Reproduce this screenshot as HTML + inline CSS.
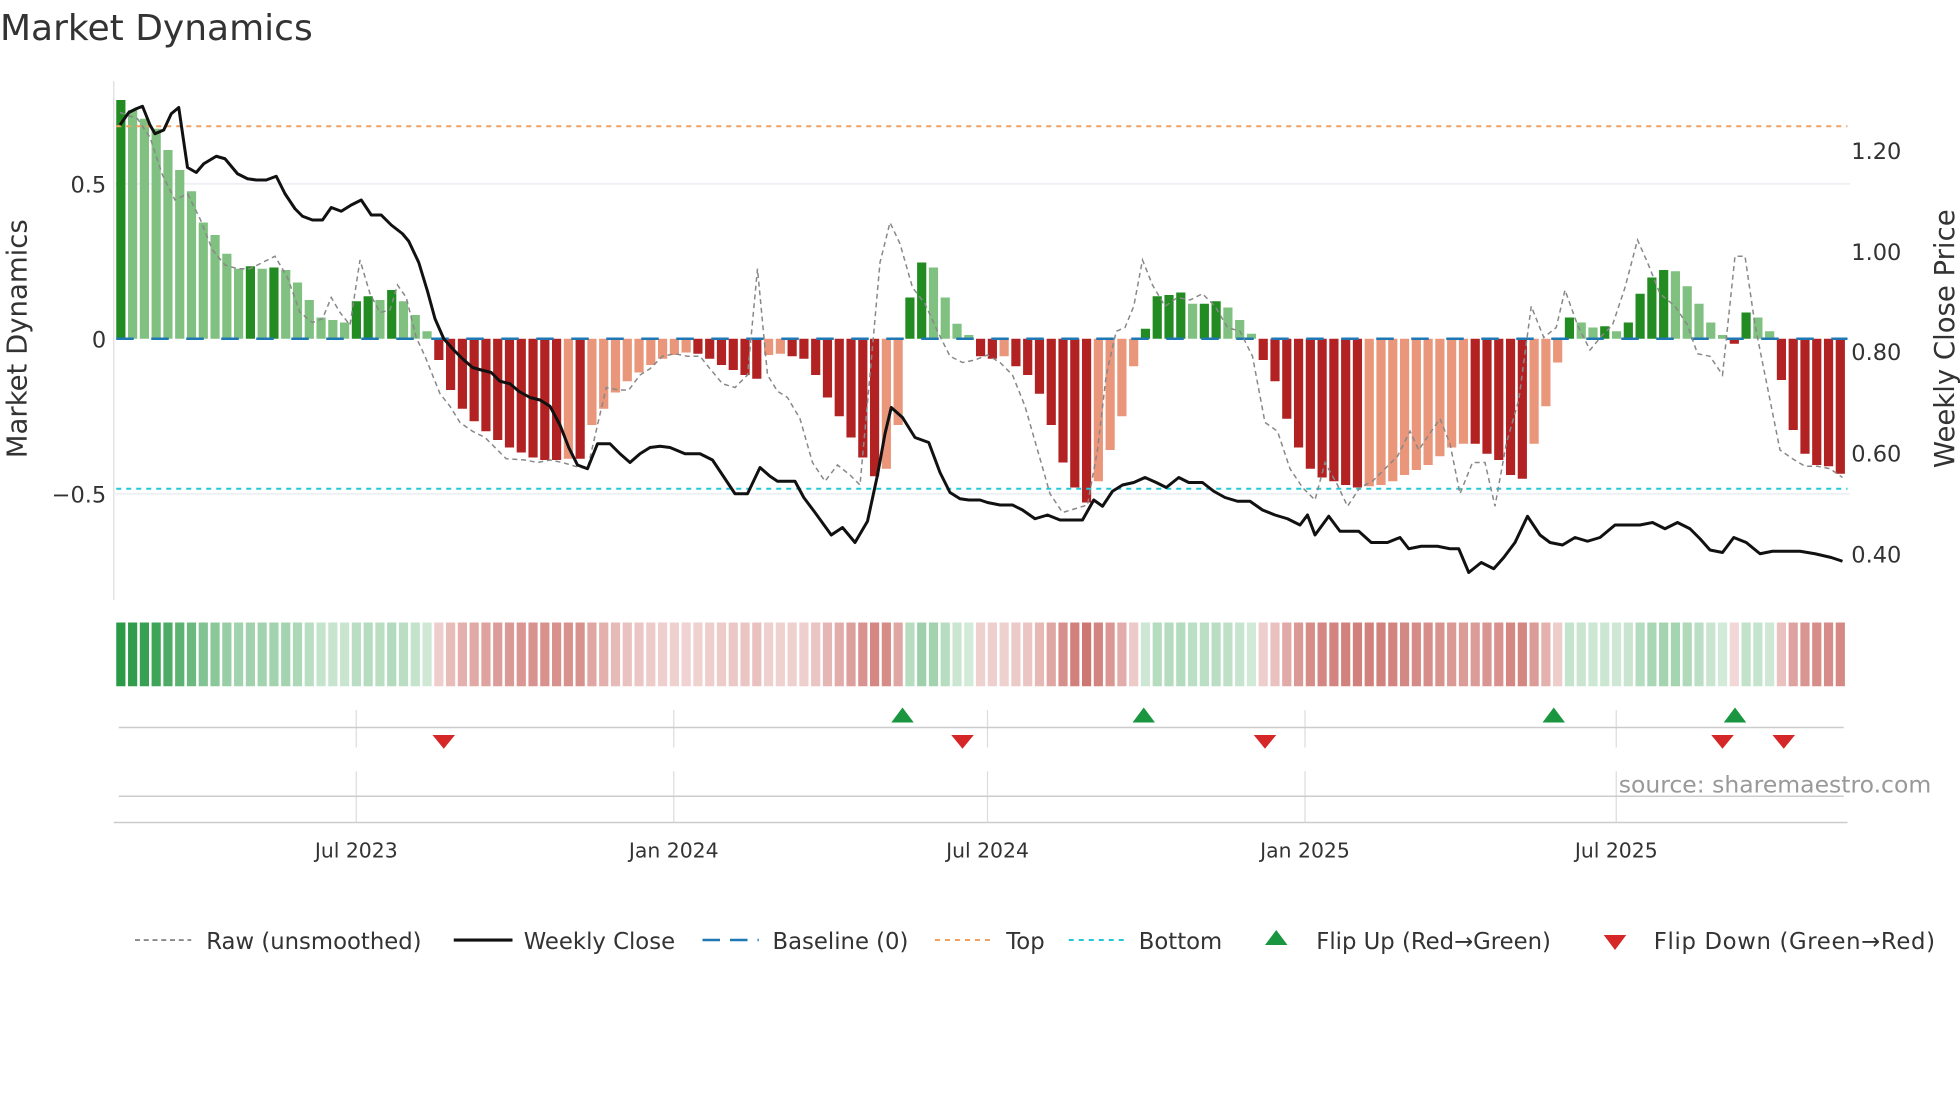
<!DOCTYPE html>
<html><head><meta charset="utf-8"><style>
html,body{margin:0;padding:0;background:#fff;}
svg{display:block;font-family:"DejaVu Sans","Liberation Sans",sans-serif;}
</style></head><body>
<svg id="s" width="1960" height="1102" viewBox="0 0 1568 881.6" xmlns="http://www.w3.org/2000/svg">
<rect width="1568" height="881.6" fill="#fff"/>
<text x="0" y="32" font-size="28.8" fill="#333">Market Dynamics</text>
<line x1="91" y1="65" x2="91" y2="480" stroke="#ddd" stroke-width="1"/>
<line x1="91" y1="147" x2="1480" y2="147" stroke="#eef0f5" stroke-width="1.5"/>
<line x1="91" y1="395" x2="1480" y2="395" stroke="#eef0f5" stroke-width="1.5"/>
<g id="bars"></g>
<line x1="93" y1="101" x2="1478" y2="101" stroke="#f0a060" stroke-width="1.6" stroke-dasharray="4,4"/>
<line x1="93" y1="391" x2="1478" y2="391" stroke="#22c8d8" stroke-width="1.6" stroke-dasharray="4,4"/>
<line x1="93" y1="271" x2="1478" y2="271" stroke="#1f77b4" stroke-width="2" stroke-dasharray="14,14"/>
<polyline id="raw" fill="none" stroke="#888" stroke-width="1.2" stroke-dasharray="4,3"/>
<polyline id="close" fill="none" stroke="#111" stroke-width="2.4" stroke-linejoin="round"/>
<g font-size="18" fill="#333">
<text x="85" y="154" text-anchor="end">0.5</text>
<text x="85" y="278" text-anchor="end">0</text>
<text x="85" y="402" text-anchor="end">−0.5</text>
<text x="1481" y="127">1.20</text>
<text x="1481" y="208">1.00</text>
<text x="1481" y="288">0.80</text>
<text x="1481" y="369">0.60</text>
<text x="1481" y="450">0.40</text>
</g>
<text transform="translate(21,271) rotate(-90)" text-anchor="middle" font-size="22" fill="#333">Market Dynamics</text>
<text transform="translate(1563,271) rotate(-90)" text-anchor="middle" font-size="22" fill="#333">Weekly Close Price</text>
<g id="strip"></g>
<g stroke="#ddd" stroke-width="1">
<line x1="285" y1="568" x2="285" y2="598"/><line x1="539" y1="568" x2="539" y2="598"/><line x1="790" y1="568" x2="790" y2="598"/><line x1="1044" y1="568" x2="1044" y2="598"/><line x1="1293" y1="568" x2="1293" y2="598"/>
<line x1="285" y1="617" x2="285" y2="658"/><line x1="539" y1="617" x2="539" y2="658"/><line x1="790" y1="617" x2="790" y2="658"/><line x1="1044" y1="617" x2="1044" y2="658"/><line x1="1293" y1="617" x2="1293" y2="658"/>
</g>
<line x1="95" y1="582" x2="1475" y2="582" stroke="#ccc" stroke-width="1.2"/>
<line x1="95" y1="637" x2="1475" y2="637" stroke="#ccc" stroke-width="1.2"/>
<line x1="91" y1="658" x2="1478" y2="658" stroke="#ccc" stroke-width="1.2"/>
<g fill="#1a9641">
<polygon points="722,566 731,578 713,578"/><polygon points="915,566 924,578 906,578"/><polygon points="1243,566 1252,578 1234,578"/><polygon points="1388,566 1397,578 1379,578"/>
</g>
<g fill="#d62728">
<polygon points="346,588 364,588 355,599"/><polygon points="761,588 779,588 770,599"/><polygon points="1003,588 1021,588 1012,599"/><polygon points="1369,588 1387,588 1378,599"/><polygon points="1418,588 1436,588 1427,599"/>
</g>
<text x="1545" y="634" text-anchor="end" font-size="18.8" fill="#999">source: sharemaestro.com</text>
<g font-size="16.3" fill="#333" text-anchor="middle">
<text x="285" y="686">Jul 2023</text><text x="539" y="686">Jan 2024</text><text x="790" y="686">Jul 2024</text><text x="1044" y="686">Jan 2025</text><text x="1293" y="686">Jul 2025</text>
</g>
<g font-size="18.2" fill="#333">
<line x1="108" y1="752" x2="153" y2="752" stroke="#777" stroke-width="1.3" stroke-dasharray="4,3"/>
<text x="165" y="759">Raw (unsmoothed)</text>
<line x1="363" y1="752" x2="410" y2="752" stroke="#111" stroke-width="2.5"/>
<text x="419" y="759">Weekly Close</text>
<line x1="562" y1="752" x2="607" y2="752" stroke="#1f77b4" stroke-width="2" stroke-dasharray="14,8"/>
<text x="618" y="759">Baseline (0)</text>
<line x1="748" y1="752" x2="793" y2="752" stroke="#f0a060" stroke-width="1.6" stroke-dasharray="4,4"/>
<text x="805" y="759">Top</text>
<line x1="855" y1="752" x2="900" y2="752" stroke="#22c8d8" stroke-width="1.6" stroke-dasharray="4,4"/>
<text x="911" y="759">Bottom</text>
<polygon points="1021,744 1030,756 1012,756" fill="#1a9641"/>
<text x="1053" y="759">Flip Up (Red→Green)</text>
<polygon points="1283,748 1301,748 1292,760" fill="#d62728"/>
<text x="1323" y="759" textLength="225">Flip Down (Green→Red)</text>
</g>
</svg>
<script>
var ys=[80,88,95,103,120,136,153,178,188,203,215,213,215,214,216,226,240,254,256,258,241,237,240,232,241,252,265,
288,312,327,337,345,352,358,362,366,368,368,367,367,340,327,314,305,298,292,287,284,282,283,287,292,296,300,303,284,283,285,287,300,318,333,350,366,381,375,340,
238,210,214,238,259,268,
285,287,285,293,300,315,340,370,390,402,385,360,333,293,
263,237,236,234,243,243,241,246,256,267,
288,305,335,358,375,382,385,388,390,389,388,385,380,376,372,365,358,355,355,363,368,380,383,355,325,290,
254,258,262,261,265,258,235,222,216,217,229,243,258,268,275,250,254,265,
304,344,363,372,373,379];
var N=ys.length,sp=(1478-93)/N,ns="http://www.w3.org/2000/svg";
function el(t,a,p){var e=document.createElementNS(ns,t);for(var k in a)e.setAttribute(k,a[k]);p.appendChild(e);}
var bars=document.getElementById('bars'),strip=document.getElementById('strip');
function mix(c,a){return 'rgb('+c.map(function(v){return Math.round(255-(255-v)*a)}).join(',')+')';}
for(var i=0;i<N;i++){var y=ys[i],v=(271-y)/248,pv=i?(271-ys[i-1])/248:0;
 var pos=v>=0,ps=pv>=0,dark=(pos!=ps)||Math.abs(v)>=Math.abs(pv);
 var col=pos?(dark?'#228b22':'#80c080'):(dark?'#b22222':'#e9967a');
 var x=93+i*sp;
 el('rect',{x:x,y:Math.min(y,271),width:sp*0.78,height:Math.max(1,Math.abs(y-271)),fill:col},bars);
 var a=0.2+0.8*Math.min(1,Math.abs(v)/0.77);
 el('rect',{x:x,y:498,width:sp*0.78,height:51,fill:pos?mix([42,154,70],a):mix([196,90,84],Math.min(1,a*1.1))},strip);
}
var cl="96,100 103,90 109,87 114,85 120,100 124,107 131,104 137,91 143,86 150,134 157,138 163,131 173,125 180,127 190,139 198,143 205,144 213,144 221,141 228,155 236,167 242,173 250,176 258,176 265,166 273,169 281,164 289,160 297,172 305,172 313,180 322,187 327,193 335,210 342,233 348,255 355,271 363,280 370,287 378,294 385,296 393,298 400,305 408,307 415,313 424,318 432,320 440,325 448,340 455,358 462,372 470,375 478,355 488,355 496,363 504,370 512,363 520,358 528,357 536,358 548,363 560,363 570,368 578,380 588,395 598,395 608,374 616,381 622,385 628,385 636,385 643,398 652,410 665,428 674,422 684,434 694,417 702,380 708,347 713,326 722,334 732,350 743,354 752,378 760,394 768,399 775,400 784,400 790,402 800,404 810,404 818,408 828,415 838,412 848,416 857,416 866,416 875,400 882,405 890,393 898,388 907,386 916,382 925,386 933,390 943,382 951,386 962,386 971,393 980,398 990,401 1000,401 1010,408 1020,412 1030,415 1040,420 1046,412 1052,428 1063,413 1072,425 1087,425 1097,434 1110,434 1120,430 1127,439 1137,437 1150,437 1160,439 1167,439 1175,458 1185,450 1195,455 1203,446 1212,434 1222,413 1232,428 1240,434 1250,436 1260,430 1270,433 1280,430 1292,420 1312,420 1322,418 1332,423 1342,418 1352,423 1360,431 1368,440 1378,442 1387,430 1397,434 1408,443 1418,441 1440,441 1452,443 1465,446 1474,449";
document.getElementById('close').setAttribute('points',cl);
var rw="96,90 110,95 120,110 130,140 140,160 150,155 160,175 170,200 180,212 190,215 200,215 210,210 220,205 230,222 240,250 250,258 258,255 265,238 272,250 280,260 288,208 296,235 304,250 312,248 318,228 325,238 333,270 340,285 346,300 352,315 360,325 368,338 378,345 388,350 398,360 405,367 420,368 430,370 440,368 450,370 460,373 470,375 478,340 485,310 495,312 503,312 512,300 520,295 530,285 540,283 550,285 560,285 568,295 578,307 588,310 598,300 606,215 614,300 622,313 630,318 640,335 650,370 660,385 670,372 680,380 688,388 696,300 704,210 712,178 720,195 730,230 740,243 750,265 760,285 770,290 780,288 790,284 800,290 810,300 820,325 830,360 840,395 850,410 860,407 870,404 878,360 885,300 893,265 900,262 907,245 914,208 922,228 932,245 942,238 952,240 962,235 972,245 982,262 992,265 1002,285 1012,338 1022,345 1032,375 1042,390 1052,400 1060,370 1070,388 1078,405 1088,390 1098,385 1108,375 1118,365 1128,345 1135,360 1143,348 1152,335 1160,355 1168,395 1178,370 1188,370 1196,405 1205,355 1215,320 1225,245 1235,270 1245,262 1252,232 1262,260 1272,280 1282,268 1290,260 1300,230 1310,192 1318,210 1328,235 1340,245 1350,260 1358,283 1368,285 1378,300 1388,205 1396,205 1404,260 1414,310 1424,360 1434,367 1444,373 1454,373 1464,375 1474,382";
document.getElementById('raw').setAttribute('points',rw);
</script>
</body></html>
